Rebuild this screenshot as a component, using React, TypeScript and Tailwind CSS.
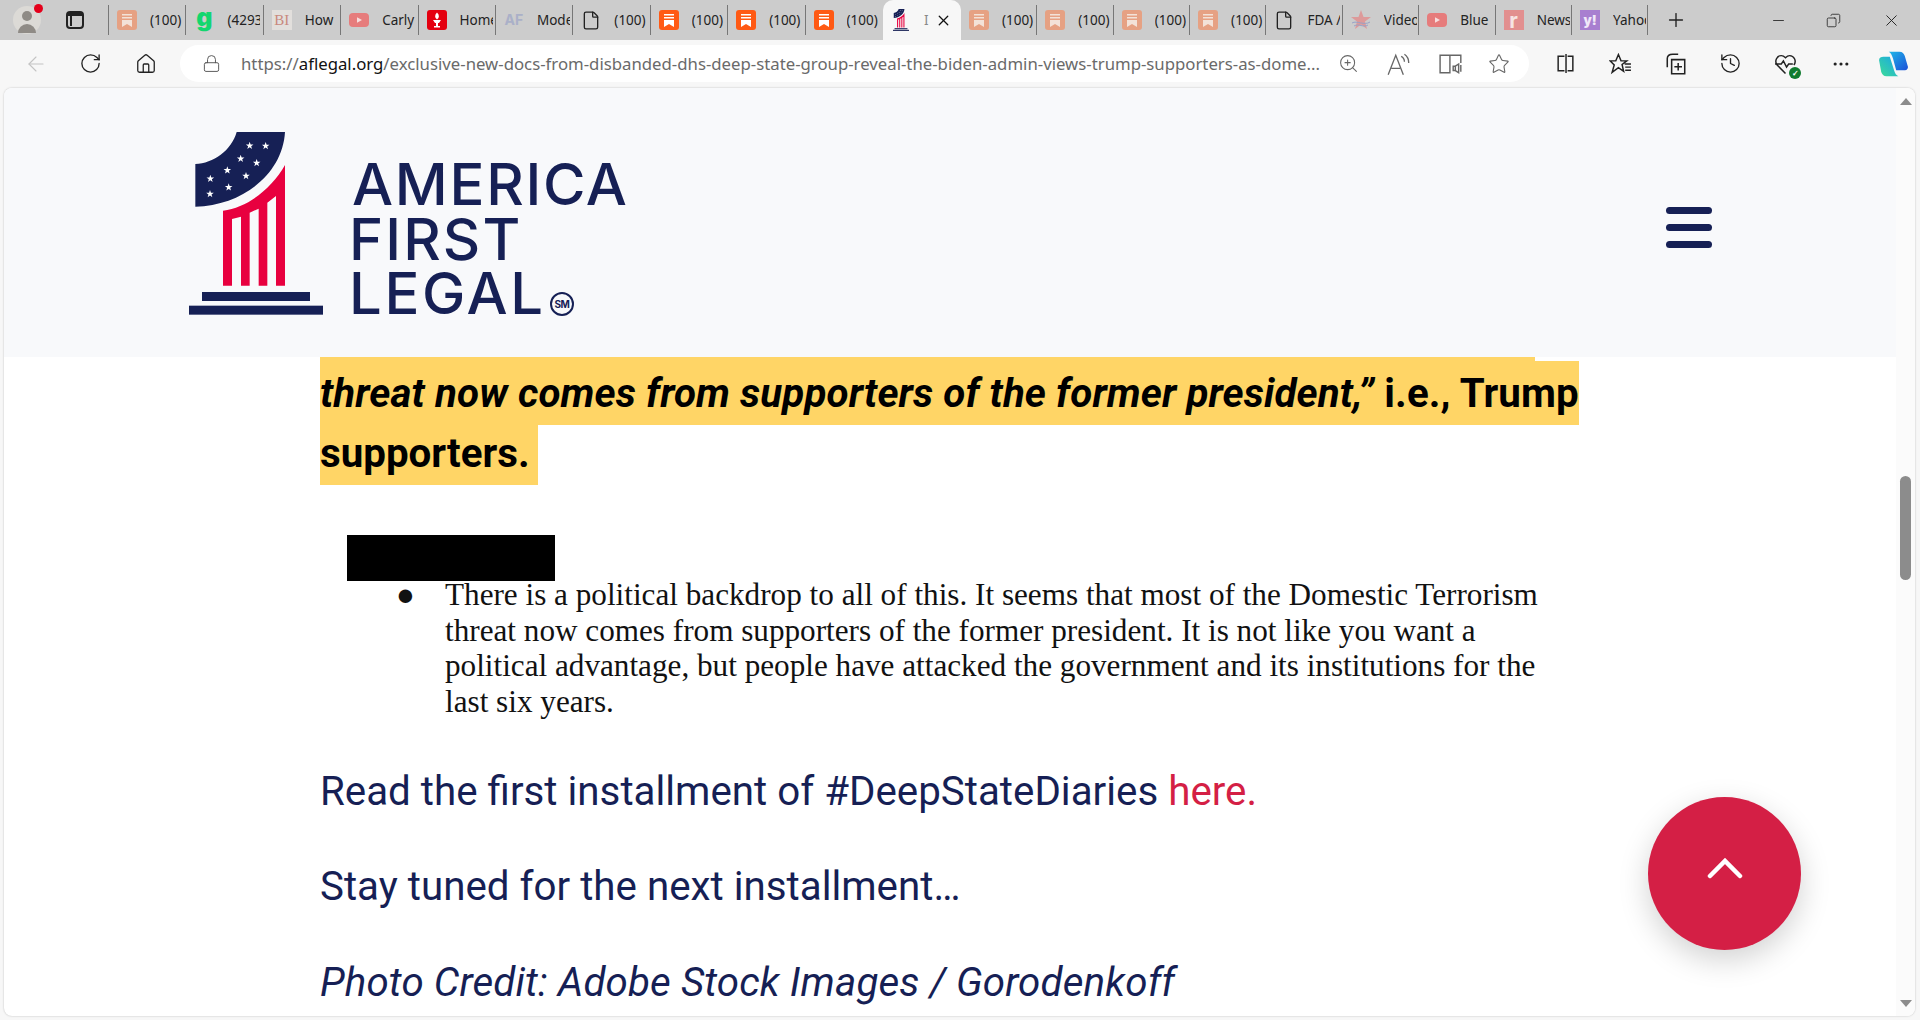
import {
  ArrowLeft,
  Ellipsis,
  File,
  House,
  Lock,
  Minus,
  Plus,
  RotateCw,
  Star,
  X,
  ZoomIn,
  History,
  Copy,
} from "lucide-react";

type TabKind = "sub" | "subDim" | "g" | "bi" | "yt" | "torch" | "af" | "doc" | "star" | "r" | "y" | "afl";

const tabs: { kind: TabKind; title: string; active?: boolean }[] = [
  { kind: "subDim", title: "(100)" },
  { kind: "g", title: "(4293" },
  { kind: "bi", title: "How" },
  { kind: "yt", title: "Carly" },
  { kind: "torch", title: "Home" },
  { kind: "af", title: "Mode" },
  { kind: "doc", title: "(100)" },
  { kind: "sub", title: "(100)" },
  { kind: "sub", title: "(100)" },
  { kind: "sub", title: "(100)" },
  { kind: "afl", title: "I", active: true },
  { kind: "subDim", title: "(100)" },
  { kind: "subDim", title: "(100)" },
  { kind: "subDim", title: "(100)" },
  { kind: "subDim", title: "(100)" },
  { kind: "doc", title: "FDA /" },
  { kind: "star", title: "Video" },
  { kind: "yt", title: "Blue" },
  { kind: "r", title: "News" },
  { kind: "y", title: "Yahoo" },
];

function LogoMark({ className }: { className: string }) {
  const stars = [
    [239, 77],
    [287, 78],
    [212, 116],
    [260, 129],
    [172, 151],
    [228, 168],
    [121, 176],
    [176, 202],
    [120, 222],
  ];
  return (
    <svg viewBox="57 36 402 549" className={className}>
      <path d="M200 36H345C338 160 220 256 76 260V132C130 130 184 92 200 36Z" fill="#162055" />
      {stars.map(([x, y]) => (
        <polygon
          key={`${x}-${y}`}
          transform={`translate(${x} ${y}) scale(12)`}
          points="0,-1 .24,-.31 .95,-.31 .38,.12 .59,.81 0,.4 -.59,.81 -.38,.12 -.95,-.31 -.24,-.31"
          fill="#fff"
        />
      ))}
      <path
        d="M159 272C235 262 305 205 345 135V497H318V228L292 248V497H266V266L239 278V497H213V290L186 297V497H159Z"
        fill="#e8003f"
      />
      <rect x="96" y="516" width="324" height="27" fill="#162055" />
      <rect x="57" y="557" width="402" height="27" fill="#162055" />
    </svg>
  );
}

function Logo() {
  return (
    <div className="flex items-start">
      <LogoMark className="h-[183px] w-[134px] shrink-0" />
      <div className="relative ml-[29px] mt-[25px] font-['Inter',sans-serif] text-[58px] font-medium leading-[54.5px] text-[#162055]">
        <div className="tracking-[1.7px]">AMERICA</div>
        <div className="-ml-[3px] tracking-[2.1px]">FIRST</div>
        <div className="-ml-[3px] tracking-[2.6px]">LEGAL</div>
        <div className="absolute left-[198px] top-[135px] flex h-[24px] w-[24px] items-center justify-center rounded-full border-2 border-[#162055] text-[10px] font-bold tracking-[-0.5px]">
          <span className="leading-none">SM</span>
        </div>
      </div>
    </div>
  );
}

function Bookmark({ dim }: { dim?: boolean }) {
  return (
    <svg viewBox="0 0 20 20" className="h-[20px] w-[20px]">
      <rect width="20" height="20" rx="3" fill={dim ? "#e6a183" : "#ff5a14"} />
      <path d="M5 4H15V5.6H5ZM5 7H15V8.6H5ZM5 10H15V17L10 14L5 17Z" fill={dim ? "#f3e2d8" : "#fff"} />
    </svg>
  );
}

function TabIcon({ kind }: { kind: TabKind }) {
  switch (kind) {
    case "sub":
      return <Bookmark />;
    case "subDim":
      return <Bookmark dim />;
    case "g":
      return (
        <span className="-mt-[6px] font-['Inter',sans-serif] text-[25px] font-black leading-[18px] text-[#12d66f]">
          g
        </span>
      );
    case "bi":
      return (
        <span className="flex h-[20px] w-[20px] items-center justify-center bg-[#e2dfdc] font-['Liberation_Serif',serif] text-[15px] leading-none text-[#c9897c]">
          BI
        </span>
      );
    case "yt":
      return (
        <svg viewBox="0 0 20 20" className="h-[20px] w-[20px]">
          <rect y="3" width="20" height="14" rx="4" fill="#e67c7c" />
          <path d="M8 7.2L13 10L8 12.8Z" fill="#f7dede" />
        </svg>
      );
    case "torch":
      return (
        <svg viewBox="0 0 20 20" className="h-[20px] w-[20px]">
          <rect width="20" height="20" rx="3" fill="#e4000f" />
          <path d="M10 2.5C12.5 5 12.5 7.5 10 9.5C7.5 7.5 7.5 5 10 2.5Z" fill="#fff" />
          <path d="M6 10H14L12 13H11V16H13V17.5H7V16H9V13H8Z" fill="#fff" />
        </svg>
      );
    case "af":
      return (
        <span className="relative block h-[20px] w-[20px] text-center font-['Inter',sans-serif] text-[14px] font-bold leading-[20px] text-[#aab0c8]">
          AF
        </span>
      );
    case "doc":
      return <File size={21} strokeWidth={1.6} className="text-[#222]" />;
    case "star":
      return (
        <svg viewBox="0 0 20 20" className="h-[20px] w-[20px]">
          <path d="M10 0L12.5 7H20L14 11.5L16 19L10 14.5L4 19L6 11.5L0 7H7.5Z" fill="#dd9a9a" />
          <path d="M1 13C6 10 13 16 19 12M3 16C8 13 12 18 17 15" stroke="#98a2c8" fill="none" />
        </svg>
      );
    case "r":
      return (
        <span className="flex h-[20px] w-[20px] items-center justify-center bg-[#e28f8f] font-['Inter',sans-serif] text-[21px] font-bold leading-none text-[#f6e4e4]">
          r
        </span>
      );
    case "y":
      return (
        <span className="flex h-[20px] w-[20px] items-center justify-center bg-[#a87fd0] font-['Inter',sans-serif] text-[13px] font-black leading-none text-[#f0e8f8]">
          y!
        </span>
      );
    case "afl":
      return <LogoMark className="h-[22px] w-[16px]" />;
  }
}

function TabStrip() {
  return (
    <div className="flex h-[40px] shrink-0 items-center bg-[#cccccc] font-['Noto_Sans',sans-serif] text-[13.5px] text-[#222]">
      <div className="flex w-[54px] justify-center">
        <div className="relative h-[28px] w-[28px] rounded-full bg-[#dcdad6]">
          <div className="absolute left-[9px] top-[5px] h-[10px] w-[10px] rounded-full bg-[#8f8b86]" />
          <div className="absolute bottom-[1px] left-[5px] h-[9px] w-[18px] rounded-t-full bg-[#8f8b86]" />
          <div className="absolute -right-[2px] -top-[2px] h-[9px] w-[9px] rounded-full bg-[#e4001b]" />
        </div>
      </div>
      <div className="flex w-[42px] justify-center">
        <div className="h-[18px] w-[18px] rounded-[4px] border-2 border-[#222]">
          <div className="h-[3px] bg-[#222]" />
          <div className="h-[10px] w-[4px] border-r-2 border-[#222]" />
        </div>
      </div>
      <div className="ml-[12px] h-[30px] w-[1px] bg-[#777]" />
      {tabs.map((t, i) =>
        t.active ? (
          <div
            key={i}
            className="flex h-[40px] w-[78px] shrink-0 items-center rounded-t-[10px] bg-[#f7f7f7] pl-[8px]"
          >
            <div className="flex w-[20px] justify-center">
              <TabIcon kind={t.kind} />
            </div>
            <span className="ml-[13px] text-[#888]">{t.title}</span>
            <X size={17} strokeWidth={1.8} className="ml-[7px] text-[#111]" />
          </div>
        ) : (
          <div
            key={i}
            className={`flex h-[40px] shrink-0 items-center pl-[8px] ${i < 10 ? "w-[77.4px]" : "w-[76.4px]"}`}
          >
            <div className="flex h-[20px] w-[20px] shrink-0 items-center justify-center">
              <TabIcon kind={t.kind} />
            </div>
            <span className="ml-[13px] w-[33px] overflow-hidden whitespace-nowrap">{t.title}</span>
            {i !== 9 && <div className="ml-auto h-[30px] w-[1px] shrink-0 bg-[#777]" />}
          </div>
        ),
      )}
      <div className="ml-[17px] flex w-[22px] justify-center">
        <Plus size={22} strokeWidth={1.5} className="text-[#222]" />
      </div>
      <div className="ml-auto flex items-center pr-[9px]">
        <Minus size={17} strokeWidth={1.2} className="mr-[39px] text-[#222]" />
        <Copy size={15} strokeWidth={1.3} className="mr-[41px] -scale-x-100 text-[#222]" />
        <X size={19} strokeWidth={1.2} className="mr-[10px] text-[#222]" />
      </div>
    </div>
  );
}

function ToolIcon({ children }: { children: React.ReactNode }) {
  return <div className="flex w-[55px] shrink-0 justify-center text-[#222]">{children}</div>;
}

function Toolbar() {
  return (
    <div className="flex h-[48px] shrink-0 items-center bg-[#f7f7f7] pb-[1px] pl-[8px]">
      <ToolIcon>
        <ArrowLeft size={24} strokeWidth={1.1} className="text-[#c4c4c4]" />
      </ToolIcon>
      <ToolIcon>
        <RotateCw size={23} strokeWidth={1.4} />
      </ToolIcon>
      <ToolIcon>
        <House size={22} strokeWidth={1.4} />
      </ToolIcon>
      <div className="ml-[7px] flex h-[37px] w-[1349px] shrink-0 items-center rounded-full bg-white pl-[22px] font-['Noto_Sans',sans-serif] text-[16.75px] text-[#6a6a6a]">
        <Lock size={19} strokeWidth={1.2} className="text-[#555]" />
        <div className="ml-[20px] w-[1091px] whitespace-nowrap">
          https://<span className="text-[#111]">aflegal.org</span>
          /exclusive-new-docs-from-disbanded-dhs-deep-state-group-reveal-the-biden-admin-views-trump-supporters-as-dome...
        </div>
        <div className="ml-[6px] flex items-center text-[#666]">
          <ZoomIn size={21} strokeWidth={1.2} className="mr-[27px]" />
          <svg viewBox="0 0 24 22" className="mr-[27px] h-[24px] w-[26px]" fill="none" stroke="#666" strokeWidth="1.2">
            <path d="M2 21L9 3L16 21M5 15H13M14 4C16 5 17 7 17 9M17 2C20 4 21 7 21 10" />
          </svg>
          <svg viewBox="0 0 22 20" className="mr-[25px] h-[22px] w-[24px]" fill="none" stroke="#666" strokeWidth="1.3">
            <path d="M1 2H10V18H1ZM10 2H20V9M13 12H15V16H13ZM15 12L18 10V18L15 16M20 11V17" />
          </svg>
          <Star size={22} strokeWidth={1.2} />
        </div>
      </div>
      <div className="ml-[9px] flex items-center">
        <ToolIcon>
          <svg viewBox="0 0 20 20" className="h-[21px] w-[21px]" fill="none" stroke="#222" strokeWidth="1.4">
            <path d="M9 3H3V17H9M12 3H17V17H12M10.5 1V19" />
          </svg>
        </ToolIcon>
        <ToolIcon>
          <svg viewBox="0 0 22 20" className="h-[22px] w-[23px]" fill="none" stroke="#222" strokeWidth="1.4">
            <path d="M9 1L11.5 7H17L12.5 10.5L14 17L9 13.5L3 18L5 11L1 7H6.5ZM15 10H21M15.5 13H21M15.5 16H21" />
          </svg>
        </ToolIcon>
        <ToolIcon>
          <svg viewBox="0 0 22 22" className="h-[24px] w-[24px]" fill="none" stroke="#222" strokeWidth="1.4">
            <path d="M3 14V6C3 3 5 2 8 2H13M7 7H19V20H7ZM13 10V17M9.5 13.5H16.5" />
          </svg>
        </ToolIcon>
        <ToolIcon>
          <History size={23} strokeWidth={1.4} />
        </ToolIcon>
        <ToolIcon>
          <div className="relative">
            <svg viewBox="0 0 22 20" className="h-[22px] w-[23px]" fill="none" stroke="#222" strokeWidth="1.4">
              <path d="M11 19L3 11C0 7 3 2 7 2C9 2 10 3 11 4C12 3 13 2 15 2C19 2 22 7 19 11M1 10H7L9 7L12 13L14 10H18" />
            </svg>
            <div className="absolute -bottom-[4px] -right-[4px] flex h-[12px] w-[12px] items-center justify-center rounded-full bg-[#0f7b2f] text-[8px] font-bold leading-none text-white">
              ✓
            </div>
          </div>
        </ToolIcon>
        <ToolIcon>
          <Ellipsis size={20} strokeWidth={1.8} />
        </ToolIcon>
        <ToolIcon>
          <svg viewBox="0 0 28 32" preserveAspectRatio="none" className="-ml-[5px] h-[27px] w-[30px]">
            <defs>
              <linearGradient id="cpA" x1="0" y1="0" x2="1" y2="1">
                <stop offset="0" stopColor="#1fb8e8" />
                <stop offset="1" stopColor="#1c4fd8" />
              </linearGradient>
              <linearGradient id="cpB" x1="0" y1="1" x2="1" y2="0">
                <stop offset="0" stopColor="#3ddc97" />
                <stop offset="1" stopColor="#18a5e8" />
              </linearGradient>
            </defs>
            <path d="M10 2H20C23 2 24 4 25 7L28 20C28 23 26 24 24 24H17L14 10C13 6 12 3 10 2Z" fill="url(#cpA)" />
            <path d="M1 12C1 9 3 8 5 8H11L15 24C16 28 17 30 19 31H8C5 31 4 29 3 26Z" fill="url(#cpB)" />
          </svg>
        </ToolIcon>
      </div>
    </div>
  );
}

function Scrollbar() {
  return (
    <div className="relative flex w-[19px] shrink-0 flex-col items-center bg-[#fbfbfb]">
      <div className="mt-[10px] h-0 w-0 border-x-[6px] border-b-[7px] border-x-transparent border-b-[#8c8c8c]" />
      <div className="mt-[371px] h-[104px] w-[11px] rounded-full bg-[#8c8c8c]" />
      <div className="mt-auto mb-[9px] h-0 w-0 border-x-[6px] border-t-[7px] border-x-transparent border-t-[#8c8c8c]" />
    </div>
  );
}

function Article() {
  return (
    <div className="pl-[316px] font-['Roboto',sans-serif] text-[40.3px] leading-[60px] text-[#161f55]">
      <div className="h-[4px] w-[1215px] bg-[#ffd566]" />
      <div className="h-[64px] w-[1259px] whitespace-nowrap bg-[#ffd566] font-bold leading-[65px] tracking-[0.11px] text-black">
        <em>threat now comes from supporters of the former president,”</em> i.e., Trump
      </div>
      <div className="h-[60px] w-[218px] bg-[#ffd566] font-bold leading-[58px] text-black">supporters.</div>

      <div className="mt-[50px] pl-[27px] font-['Liberation_Serif',serif] text-[31.2px] leading-[35.6px] text-[#111]">
        <div className="h-[46px] w-[208px] bg-black" />
        <div className="-mt-[4px] flex">
          <div className="w-[98px] pl-[49px]">●</div>
          <div className="w-[1110px] whitespace-nowrap">
            <div>There is a political backdrop to all of this. It seems that most of the Domestic Terrorism</div>
            <div>threat now comes from supporters of the former president. It is not like you want a</div>
            <div>political advantage, but people have attacked the government and its institutions for the</div>
            <div>last six years.</div>
          </div>
        </div>
      </div>

      <p className="mt-[43px]">
        Read the first installment of #DeepStateDiaries <span className="text-[#d41f45]">here.</span>
      </p>
      <p className="mt-[35px]">Stay tuned for the next installment…</p>
      <p className="mt-[36px] italic tracking-[0.13px]">Photo Credit: Adobe Stock Images / Gorodenkoff</p>
    </div>
  );
}

export default function App() {
  return (
    <div className="flex h-[1020px] w-[1920px] flex-col overflow-hidden bg-[#f7f7f7]">
      <TabStrip />
      <Toolbar />
      <div className="flex min-h-0 flex-1 pb-[4px] pl-[4px] pr-[5px]">
        <div className="flex min-w-0 flex-1 overflow-hidden rounded-lg bg-white shadow-[0_0_2px_rgba(0,0,0,0.25)]">
          <main className="relative min-w-0 flex-1 overflow-hidden">
            <header className="flex h-[269px] items-start justify-between bg-[#f8f9fb] pl-[185px] pr-[184px] pt-[44px]">
              <Logo />
              <div className="mt-[75px] flex w-[46px] flex-col gap-[10px]">
                <div className="h-[7px] rounded-full bg-[#162055]" />
                <div className="h-[7px] rounded-full bg-[#162055]" />
                <div className="h-[7px] rounded-full bg-[#162055]" />
              </div>
            </header>
            <Article />
            <button className="absolute bottom-[66px] right-[95px] flex h-[153px] w-[153px] items-center justify-center rounded-full bg-[#d41f45] shadow-[0_10px_30px_rgba(0,0,0,0.18)]">
              <svg viewBox="0 0 36 22" className="-mt-[12px] h-[22px] w-[36px]" fill="none" stroke="#fff" strokeWidth="4.5" strokeLinecap="round">
                <path d="M3 19L18 4L33 19" />
              </svg>
            </button>
          </main>
          <Scrollbar />
        </div>
      </div>
    </div>
  );
}
